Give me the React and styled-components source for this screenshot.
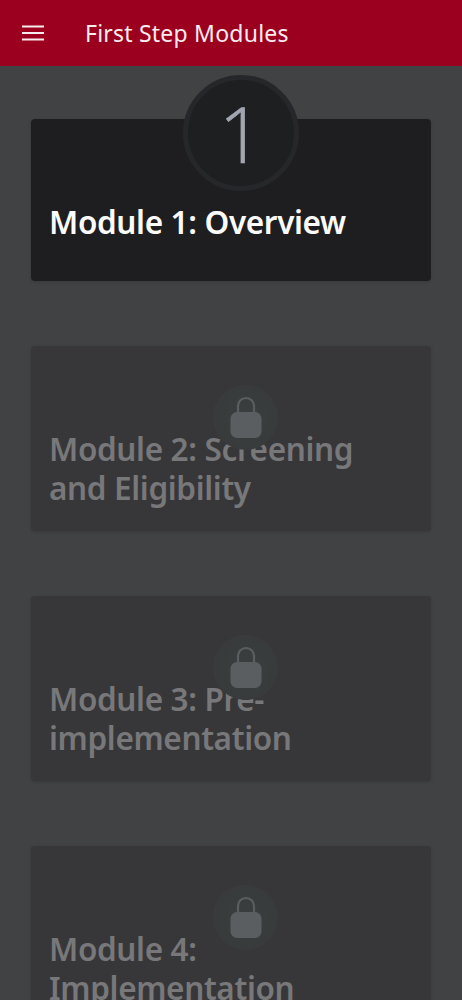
import React from "react";
import styled, { createGlobalStyle } from "styled-components";

const Global = createGlobalStyle`
  html, body { margin: 0; padding: 0; background: #414243; }
  body { font-family: "Noto Sans", "Open Sans", sans-serif; }
`;
const Page = styled.div`
  width: 462px; height: 1000px; overflow: hidden; background: #414243;
  display: flex; flex-direction: column;
`;
const Header = styled.header`
  flex: none; height: 66px; background: #9b001f; display: flex; align-items: center;
  padding: 0 0 0 22px; box-sizing: border-box; gap: 41px;
`;
const Menu = styled.svg`
  flex: none; display: block;
`;
const Title = styled.h1`
  margin: 0; color: #f8ecee; font-size: 23px; font-weight: 400; line-height: 30px; letter-spacing: 0.22px;
`;
const List = styled.main`
  display: flex; flex-direction: column; gap: 65px; padding: 53px 31px 0; width: 400px;
`;
const Card = styled.section`
  position: relative; flex: none; box-sizing: border-box; width: 400px; border-radius: 4px;
  background: ${p => p.$locked ? "#373739" : "#1e1e20"};
  height: ${p => p.$locked ? "185px" : "162px"};
  padding: 83px 40px 0 18px;
  box-shadow: 0 1px 3px rgba(0,0,0,.16);
`;
const Name = styled.h2`
  margin: 0; font-size: 31.5px; line-height: 39px; font-weight: 600; letter-spacing: -0.35px;
  color: ${p => p.$locked ? "#78787a" : "#fbfbfb"};
`;
const NumberBadge = styled.div`
  position: absolute; left: 152px; top: -44px; width: 116px; height: 116px; box-sizing: border-box;
  border-radius: 50%; background: #1e1f21; border: 5px solid #26272a;
  display: flex; align-items: center; justify-content: center;
  color: #a2a6b0; font-size: 78px; font-weight: 300; line-height: 1; font-family: "Open Sans", sans-serif;
  -webkit-text-stroke: 0.6px #a2a6b0;
`;
const LockBadge = styled.div`
  position: absolute; left: 182px; top: 39px; width: 65px; height: 65px; border-radius: 50%;
  background: radial-gradient(circle, #393e3f 0%, #393c3d 50%, #373839 100%);
  display: flex; align-items: center; justify-content: center;
`;
const Lock = styled.svg`display: block; flex: none;`;

const modules = [
  { name: "Module 2: Screening and Eligibility" },
  { name: "Module 3: Pre-implementation" },
  { name: "Module 4: Implementation" },
];

export default function App() {
  return (
    <Page>
      <Global />
      <Header>
        <Menu width="22" height="16" viewBox="0 0 22 16">
          <path d="M0 1.5h22M0 8h22M0 14.5h22" stroke="#f8ecee" strokeWidth="2.2" fill="none" />
        </Menu>
        <Title>First Step Modules</Title>
      </Header>
      <List>
        <Card>
          <NumberBadge>1</NumberBadge>
          <Name>Module 1: Overview</Name>
        </Card>
        {modules.map(m => (
          <Card $locked key={m.name}>
            <Name $locked>{m.name}</Name>
            <LockBadge>
              <Lock width="32" height="44" viewBox="0 0 32 44">
                <path d="M8 18V10a8 8 0 0 1 16 0v8" stroke="#5b5e60" strokeWidth="2.2" fill="none" />
                <rect x="0.5" y="16" width="31" height="26" rx="6.5" fill="#5b5e60" />
              </Lock>
            </LockBadge>
          </Card>
        ))}
      </List>
    </Page>
  );
}
